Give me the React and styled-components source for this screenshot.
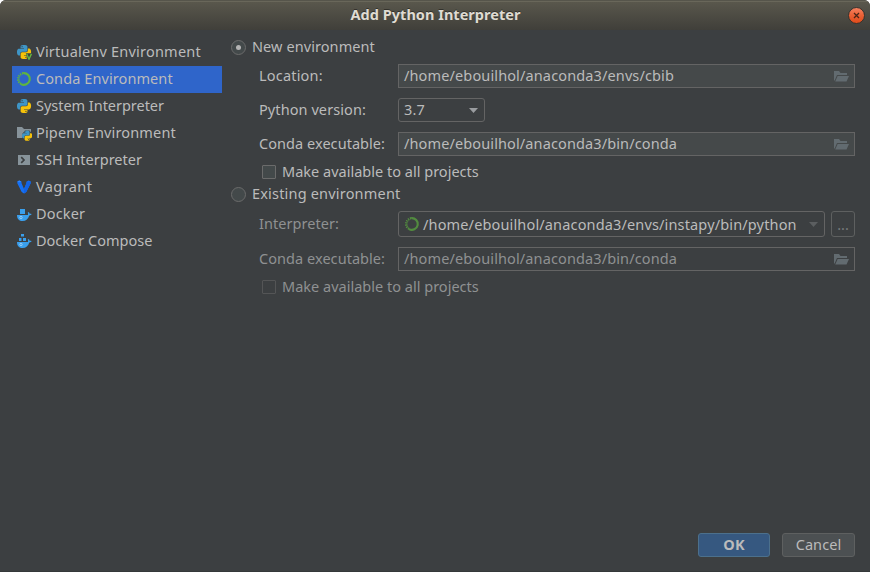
import React from 'react';
import styled, { createGlobalStyle, css } from 'styled-components';

const Global = createGlobalStyle`
  * { box-sizing: border-box; }
  body { margin: 0; background: #fff; }
`;

const Dialog = styled.div`
  width: 870px;
  height: 572px;
  display: flex;
  flex-direction: column;
  background: #3c3f41;
  border-radius: 6px 6px 0 0;
  border-bottom: 1px solid #35383a;
  overflow: hidden;
  color: #bbbbbb;
  font-family: "Noto Sans", "Open Sans", sans-serif;
  font-size: 14.5px;
  line-height: 20px;
  white-space: nowrap;
`;

const TitleBar = styled.header`
  height: 30px;
  flex: none;
  display: grid;
  grid-template-columns: 1fr auto 1fr;
  align-items: center;
  padding: 0 5px 0 6px;
  border-top: 1px solid #56554b;
  background: linear-gradient(#69675a 0, #69675a 1px, #59574c 1px, #403f3a 100%);
`;

const Title = styled.h1`
  grid-column: 2;
  margin: -3px 0 0;
  font-size: 14.5px;
  line-height: 20px;
  font-weight: 700;
  letter-spacing: 0.03px;
  color: #dfdbd2;
  text-shadow: 0 -1px 0 rgba(0, 0, 0, 0.4);
`;

const CloseButton = styled.button`
  justify-self: end;
  width: 17px;
  height: 17px;
  padding: 0;
  border: 0;
  background: none;
  display: flex;
  margin-top: -1px;
`;

const Body = styled.div`
  flex: 1;
  display: flex;
  gap: 9px;
  padding: 0 15px 0 12px;
`;

const List = styled.ul`
  width: 210px;
  margin: 9px 0 0;
  padding: 0;
  list-style: none;
`;

const Item = styled.li`
  height: 27px;
  padding: 0 4px 1px;
  display: flex;
  align-items: center;
  gap: 4px;
  background: ${(p) => (p.$selected ? '#2f65ca' : 'transparent')};
`;

const Text = styled.span`
  padding-bottom: 2px;
  letter-spacing: ${(p) => p.$track || 0}px;
  color: ${(p) => (p.$dim ? '#8f9192' : 'inherit')};
`;

const Form = styled.main`
  flex: 1;
  min-width: 0;
  padding-top: 7px;
`;

const OptionRow = styled.label`
  display: flex;
  align-items: center;
  gap: 6px;
  height: 20px;
  padding-bottom: 1px;
`;

const Radio = styled.span`
  width: 15px;
  height: 15px;
  border-radius: 50%;
  border: 1px solid #6b6b6b;
  background: #43494a;
  display: grid;
  place-items: center;
  margin-top: 1px;
  &::after {
    content: '';
    width: 5px;
    height: 5px;
    border-radius: 50%;
    background: ${(p) => (p.$on ? '#b4b4b4' : 'transparent')};
  }
`;

const Fields = styled.div`
  display: grid;
  grid-template-columns: 139px 1fr;
  row-gap: 10px;
  align-items: center;
  margin: 7px 0 6px 28px;
`;

const Label = styled(Text)`
  padding-bottom: 3px;
`;

const control = css`
  display: flex;
  align-items: center;
  height: 24px;
  border: 1px solid #646464;
`;

const PathField = styled.div`
  ${control}
  justify-content: space-between;
  padding: 0 5px 1px;
  background: ${(p) => (p.$disabled ? '#3c3f41' : '#45494a')};
`;

const Select = styled.div`
  ${control}
  justify-content: space-between;
  width: 87px;
  padding: 0 6px 0 5px;
  border-radius: 3px;
`;

const ComboRow = styled.div`
  display: flex;
  gap: 6px;
`;

const Combo = styled.div`
  ${control}
  flex: 1;
  height: 26px;
  gap: 3px;
  padding: 0 6px 0 5px;
  border-radius: 3px;
`;

const ComboValue = styled(Text)`
  flex: 1;
  padding-bottom: 0;
`;

const MoreButton = styled.button`
  ${control}
  width: 24px;
  height: 26px;
  padding: 0;
  justify-content: center;
  border-color: #5e6060;
  border-radius: 3px;
  background: none;
  color: #777a7b;
  font: inherit;
`;

const CheckRow = styled(OptionRow)`
  margin-left: 31px;
`;

const Check = styled.span`
  width: 14px;
  height: 14px;
  border: 1px solid ${(p) => (p.$disabled ? '#545556' : '#6b6b6b')};
  border-radius: 1px;
  background: ${(p) => (p.$disabled ? '#3c3f41' : '#43494a')};
  margin-top: 1px;
`;

const SecondOption = styled(OptionRow)`
  margin-top: 2px;
`;

const Footer = styled.footer`
  display: flex;
  justify-content: flex-end;
  gap: 12px;
  padding: 0 15px 14px;
`;

const Button = styled.button`
  width: ${(p) => (p.$primary ? 72 : 73)}px;
  height: 24px;
  padding: 0 0 2px;
  border: 1px solid ${(p) => (p.$primary ? '#4c708c' : '#5e6060')};
  border-radius: 3px;
  background: ${(p) => (p.$primary ? '#365880' : '#4c5052')};
  color: #bbbbbb;
  font: inherit;
  line-height: 20px;
  font-weight: ${(p) => (p.$primary ? 700 : 400)};
  letter-spacing: ${(p) => (p.$primary ? 0.3 : 0.1)}px;
`;

const Glyph = styled.svg`
  flex: none;
  display: block;
`;

const Icon = ({ children, ...rest }) => (
  <Glyph width="16" height="16" viewBox="0 0 16 16" {...rest}>{children}</Glyph>
);

const SNAKE =
  'M14.25.18l.9.2.73.26.59.3.45.32.34.34.25.34.16.33.1.3.04.26.02.2-.01.13V8.5l-.05.63-.13.55-.21.46-.26.38-.3.31-.33.25-.35.19-.35.14-.33.1-.3.07-.26.04-.21.02H8.77l-.69.05-.59.14-.5.22-.41.27-.33.32-.27.35-.2.36-.15.37-.1.35-.07.32-.04.27-.02.21v3.06H3.17l-.21-.03-.28-.07-.32-.12-.35-.18-.36-.26-.36-.36-.35-.46-.32-.59-.28-.73-.21-.88-.14-1.05-.05-1.23.06-1.22.16-1.04.24-.87.32-.71.36-.57.4-.44.42-.33.42-.24.4-.16.36-.1.32-.05.24-.01h.16l.06.01h8.16v-.83H6.18l-.01-2.75-.02-.37.05-.34.11-.31.17-.28.25-.26.31-.23.38-.2.44-.18.51-.15.58-.12.64-.1.71-.06.77-.04.84-.02 1.27.05zm-6.3 1.98l-.23.33-.08.41.08.41.23.34.33.22.41.09.41-.09.33-.22.23-.34.08-.41-.08-.41-.23-.33-.33-.22-.41-.09-.41.09z';

const Snakes = ({ transform }) => (
  <g transform={transform}>
    <path d={SNAKE} fill="#3e95c6" />
    <path d={SNAKE} fill="#f5c20a" transform="rotate(180 12 12)" />
  </g>
);

const PythonIcon = () => (
  <Icon><Snakes transform="translate(1 1) scale(.585)" /></Icon>
);

const VirtualenvIcon = () => (
  <Icon>
    <Snakes transform="translate(1 1) scale(.585)" />
    <path d="M9.800 9.200H16V16h-4.500z" fill="#3c3f41" />
    <path d="M10.700 9.800l2.300 5.400 2.400-5.400" fill="none" stroke="#62b543" strokeWidth="1.400" />
  </Icon>
);

const CondaIcon = ({ dim }) => (
  <Icon opacity={dim ? 0.65 : 1}>
    <path d="M7.200 2.100A5.900 5.900 0 1 1 5 13.100" fill="none" stroke="#5fb53f" strokeWidth="2.200" />
    <path d="M5 13.100A5.900 5.900 0 0 1 7.200 2.100" fill="none" stroke="#5fb53f" strokeWidth="2" strokeDasharray="1.300 .9" />
    <path d="M5.500 12.300A5 5 0 0 1 7 3.100" fill="none" stroke="#5fb53f" strokeWidth=".5" />
  </Icon>
);

const PipenvIcon = () => (
  <Icon>
    <path d="M1 2h5l2 2h7v3.500l-1.500-2H9L6.200 9v4H1z" fill="#87939a" />
    <Snakes transform="translate(6 5.600) scale(.425)" />
  </Icon>
);

const SshIcon = () => (
  <Icon>
    <path d="M2 3h12v10H2z" fill="#87939a" />
    <path d="M5.200 5.200L8 8l-2.800 2.800" fill="none" stroke="#3c3f41" strokeWidth="1.700" />
  </Icon>
);

const VagrantIcon = () => (
  <Icon>
    <path d="M1.300 2.600l2-1L5.500 2.700v1.400L8 10l2.500-5.900V2.700l2.200-1.100 2 1v1.600L10.300 13 8 14.400 5.700 13 1.300 4.200z" fill="#1570f5" />
    <path d="M10.500 2.700l4.200-.1v1.600L10.300 13 8 14.400V10l2.500-5.900z" fill="#1263e6" />
    <path d="M1.300 2.600l2-1 2.200 1.100-2.300.6z" fill="#2f86ff" />
  </Icon>
);

const Whale = () => (
  <g transform="translate(0 .8)">
    <path d="M1 8.200h10.900c.4-.7.300-1.500-.2-2.200l.8-.7c.7.500 1.100 1 1.200 1.700.7-.1 1.400 0 1.900.300-.4 1-1.200 1.400-2.300 1.400C12.300 12.200 10 14.200 6.700 14.200 3.200 14.200 1 12.300 1 8.200z" fill="#3a9fec" />
    <circle cx="5" cy="10.700" r="1.200" fill="none" stroke="#a9d5f7" strokeWidth=".8" />
  </g>
);

const DockerIcon = () => (
  <Icon>
    <Whale />
    <path d="M4 3h5v5H4z" fill="#3a9fec" />
  </Icon>
);

const ComposeIcon = () => (
  <Icon>
    <Whale />
    <path d="M5 1h3v2.500H5zM3 5h2.500v3H3zM7 5h3v3H7z" fill="#3a9fec" />
  </Icon>
);

const FolderIcon = () => (
  <Icon>
    <path d="M1 3h5l1.500 2H14v2H4L1.700 12.500H1z" fill="#626b70" />
    <path d="M4.600 8H16l-2.500 5.500H2.200z" fill="#626b70" />
  </Icon>
);

const Arrow = ({ color }) => (
  <Glyph width="9" height="5" viewBox="0 0 9 5"><path d="M0 0h9L4.500 5z" fill={color} /></Glyph>
);

const CloseIcon = () => (
  <Glyph width="17" height="17" viewBox="0 0 17 17">
    <defs>
      <linearGradient id="close" x1="0" y1="0" x2="0" y2="1">
        <stop offset="0" stopColor="#f58362" />
        <stop offset=".5" stopColor="#ea6035" />
        <stop offset="1" stopColor="#df4a18" />
      </linearGradient>
    </defs>
    <circle cx="8.500" cy="8.500" r="8" fill="url(#close)" stroke="#33322e" />
    <path d="M6 6l5 5M11 6l-5 5" stroke="#4a2517" strokeWidth="1.300" />
  </Glyph>
);

const ENVIRONMENTS = [
  { name: 'Virtualenv Environment', icon: VirtualenvIcon, track: 0.21 },
  { name: 'Conda Environment', icon: CondaIcon, track: 0.09, selected: true },
  { name: 'System Interpreter', icon: PythonIcon, track: -0.03 },
  { name: 'Pipenv Environment', icon: PipenvIcon, track: 0.15 },
  { name: 'SSH Interpreter', icon: SshIcon, track: 0 },
  { name: 'Vagrant', icon: VagrantIcon, track: 0.4 },
  { name: 'Docker', icon: DockerIcon, track: 0.15 },
  { name: 'Docker Compose', icon: ComposeIcon, track: 0 },
];

export default function App() {
  return (
    <Dialog>
      <Global />
      <TitleBar>
        <Title>Add Python Interpreter</Title>
        <CloseButton aria-label="Close"><CloseIcon /></CloseButton>
      </TitleBar>
      <Body>
        <List>
          {ENVIRONMENTS.map(({ name, icon: EnvIcon, track, selected }) => (
            <Item key={name} $selected={selected}>
              <EnvIcon />
              <Text $track={track}>{name}</Text>
            </Item>
          ))}
        </List>
        <Form>
          <OptionRow>
            <Radio $on />
            <Text $track={0.08}>New environment</Text>
          </OptionRow>
          <Fields>
            <Label $track={0.19}>Location:</Label>
            <PathField>
              <Text $track={0.13}>/home/ebouilhol/anaconda3/envs/cbib</Text>
              <FolderIcon />
            </PathField>
            <Label $track={0.08}>Python version:</Label>
            <Select>
              <Text $track={0.17}>3.7</Text>
              <Arrow color="#9a9da0" />
            </Select>
            <Label $track={0.05}>Conda executable:</Label>
            <PathField>
              <Text $track={0.12}>/home/ebouilhol/anaconda3/bin/conda</Text>
              <FolderIcon />
            </PathField>
          </Fields>
          <CheckRow>
            <Check />
            <Text $track={0.01}>Make available to all projects</Text>
          </CheckRow>
          <SecondOption>
            <Radio />
            <Text $track={0.19}>Existing environment</Text>
          </SecondOption>
          <Fields>
            <Label $dim $track={0.04}>Interpreter:</Label>
            <ComboRow>
              <Combo>
                <CondaIcon dim />
                <ComboValue $track={0.15}>/home/ebouilhol/anaconda3/envs/instapy/bin/python</ComboValue>
                <Arrow color="#5b5e60" />
              </Combo>
              <MoreButton>...</MoreButton>
            </ComboRow>
            <Label $dim $track={0.05}>Conda executable:</Label>
            <PathField $disabled>
              <Text $dim $track={0.12}>/home/ebouilhol/anaconda3/bin/conda</Text>
              <FolderIcon />
            </PathField>
          </Fields>
          <CheckRow>
            <Check $disabled />
            <Text $dim $track={0.01}>Make available to all projects</Text>
          </CheckRow>
        </Form>
      </Body>
      <Footer>
        <Button $primary>OK</Button>
        <Button>Cancel</Button>
      </Footer>
    </Dialog>
  );
}
